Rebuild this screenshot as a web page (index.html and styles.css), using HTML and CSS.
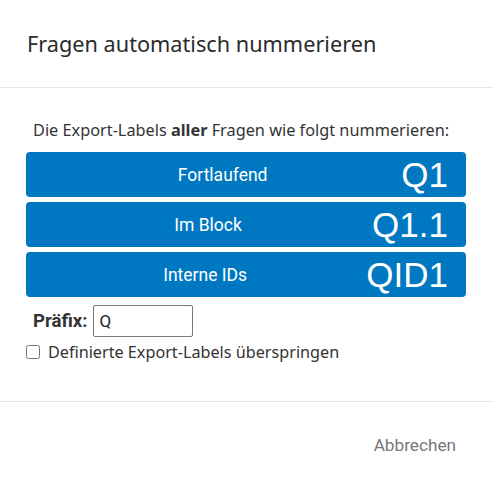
FILE: index.html
```html
<!DOCTYPE html>
<html lang="de">
<head>
<meta charset="utf-8">
<link rel="stylesheet" href="styles.css">
</head>
<body>
<div class="dialog">
  <div class="header">
    <h1 class="title">Fragen automatisch nummerieren</h1>
  </div>
  <div class="content">
    <p class="intro">Die Export-Labels <b>aller</b> Fragen wie folgt nummerieren:</p>
    <div class="options">
      <button class="opt"><span class="opt-label">Fortlaufend</span><span class="opt-num">Q1</span></button>
      <button class="opt"><span class="opt-label">Im Block</span><span class="opt-num">Q1.1</span></button>
      <button class="opt"><span class="opt-label">Interne IDs</span><span class="opt-num">QID1</span></button>
    </div>
    <div class="prefix-row">
      <label class="prefix-label" for="prefix">Präfix:</label>
      <input class="prefix-input" id="prefix" type="text" value="Q">
    </div>
    <label class="skip-row">
      <input class="skip-box" type="checkbox">
      <span>Definierte Export-Labels überspringen</span>
    </label>
  </div>
  <div class="footer">
    <button class="cancel">Abbrechen</button>
  </div>
</div>
</body>
</html>
```
FILE: styles.css
```css
html, body {
  margin: 0;
  padding: 0;
  background: #fff;
}
.dialog {
  width: 493px;
  font-family: "Noto Sans", "Open Sans", sans-serif;
  color: #333;
}
.header {
  height: 88px;
  box-sizing: border-box;
  border-bottom: 1px solid #e6e6e6;
  display: flex;
  align-items: center;
  padding: 0 27px 1px;
}
.title {
  margin: 0;
  font-weight: normal;
  font-size: 21.7px;
  color: #2b2b2b;
}
.content {
  padding: 31px 27px 0 26px;
  height: 314px;
  box-sizing: border-box;
  border-bottom: 1px solid #e6e6e6;
}
.intro {
  margin: 0 0 11px 7px;
  font-size: 16.3px;
  line-height: 22px;
  color: #333;
}
.intro b {
  font-weight: bold;
}
.options {
  display: flex;
  flex-direction: column;
  gap: 5px;
  width: 440px;
}
.opt {
  display: flex;
  align-items: center;
  height: 45px;
  padding: 0 18px;
  border: none;
  border-radius: 4px;
  background: #0078c1;
  color: #fff;
  font-family: Roboto, "Liberation Sans", Arial, sans-serif;
  cursor: pointer;
}
.opt-label {
  flex: 1;
  text-align: center;
  font-size: 17.5px;
}
.opt-num {
  font-family: "Liberation Sans", Arial, sans-serif;
  font-size: 35px;
  line-height: 1;
}
.prefix-row {
  display: flex;
  align-items: center;
  margin-top: 8px;
  padding-left: 7px;
  gap: 6px;
}
.prefix-label {
  font-family: Roboto, "Liberation Sans", sans-serif;
  font-weight: bold;
  font-size: 18.6px;
  color: #333;
}
.prefix-input {
  width: 100px;
  height: 32px;
  box-sizing: border-box;
  border: 1px solid #777;
  border-radius: 2px;
  padding: 0 5px;
  font-family: Roboto, sans-serif;
  font-size: 17px;
  color: #222;
}
.skip-row {
  display: flex;
  align-items: center;
  margin-top: 4px;
  font-size: 16.2px;
  gap: 8px;
}
.skip-box {
  margin: 0;
  width: 14px;
  height: 14px;
}
.footer {
  height: 85px;
  display: flex;
  align-items: center;
  justify-content: flex-end;
  padding-right: 37px;
}
.cancel {
  border: none;
  background: none;
  padding: 0;
  font-family: Roboto, "Liberation Sans", Arial, sans-serif;
  font-size: 17.2px;
  color: #777;
  cursor: pointer;
}
```
